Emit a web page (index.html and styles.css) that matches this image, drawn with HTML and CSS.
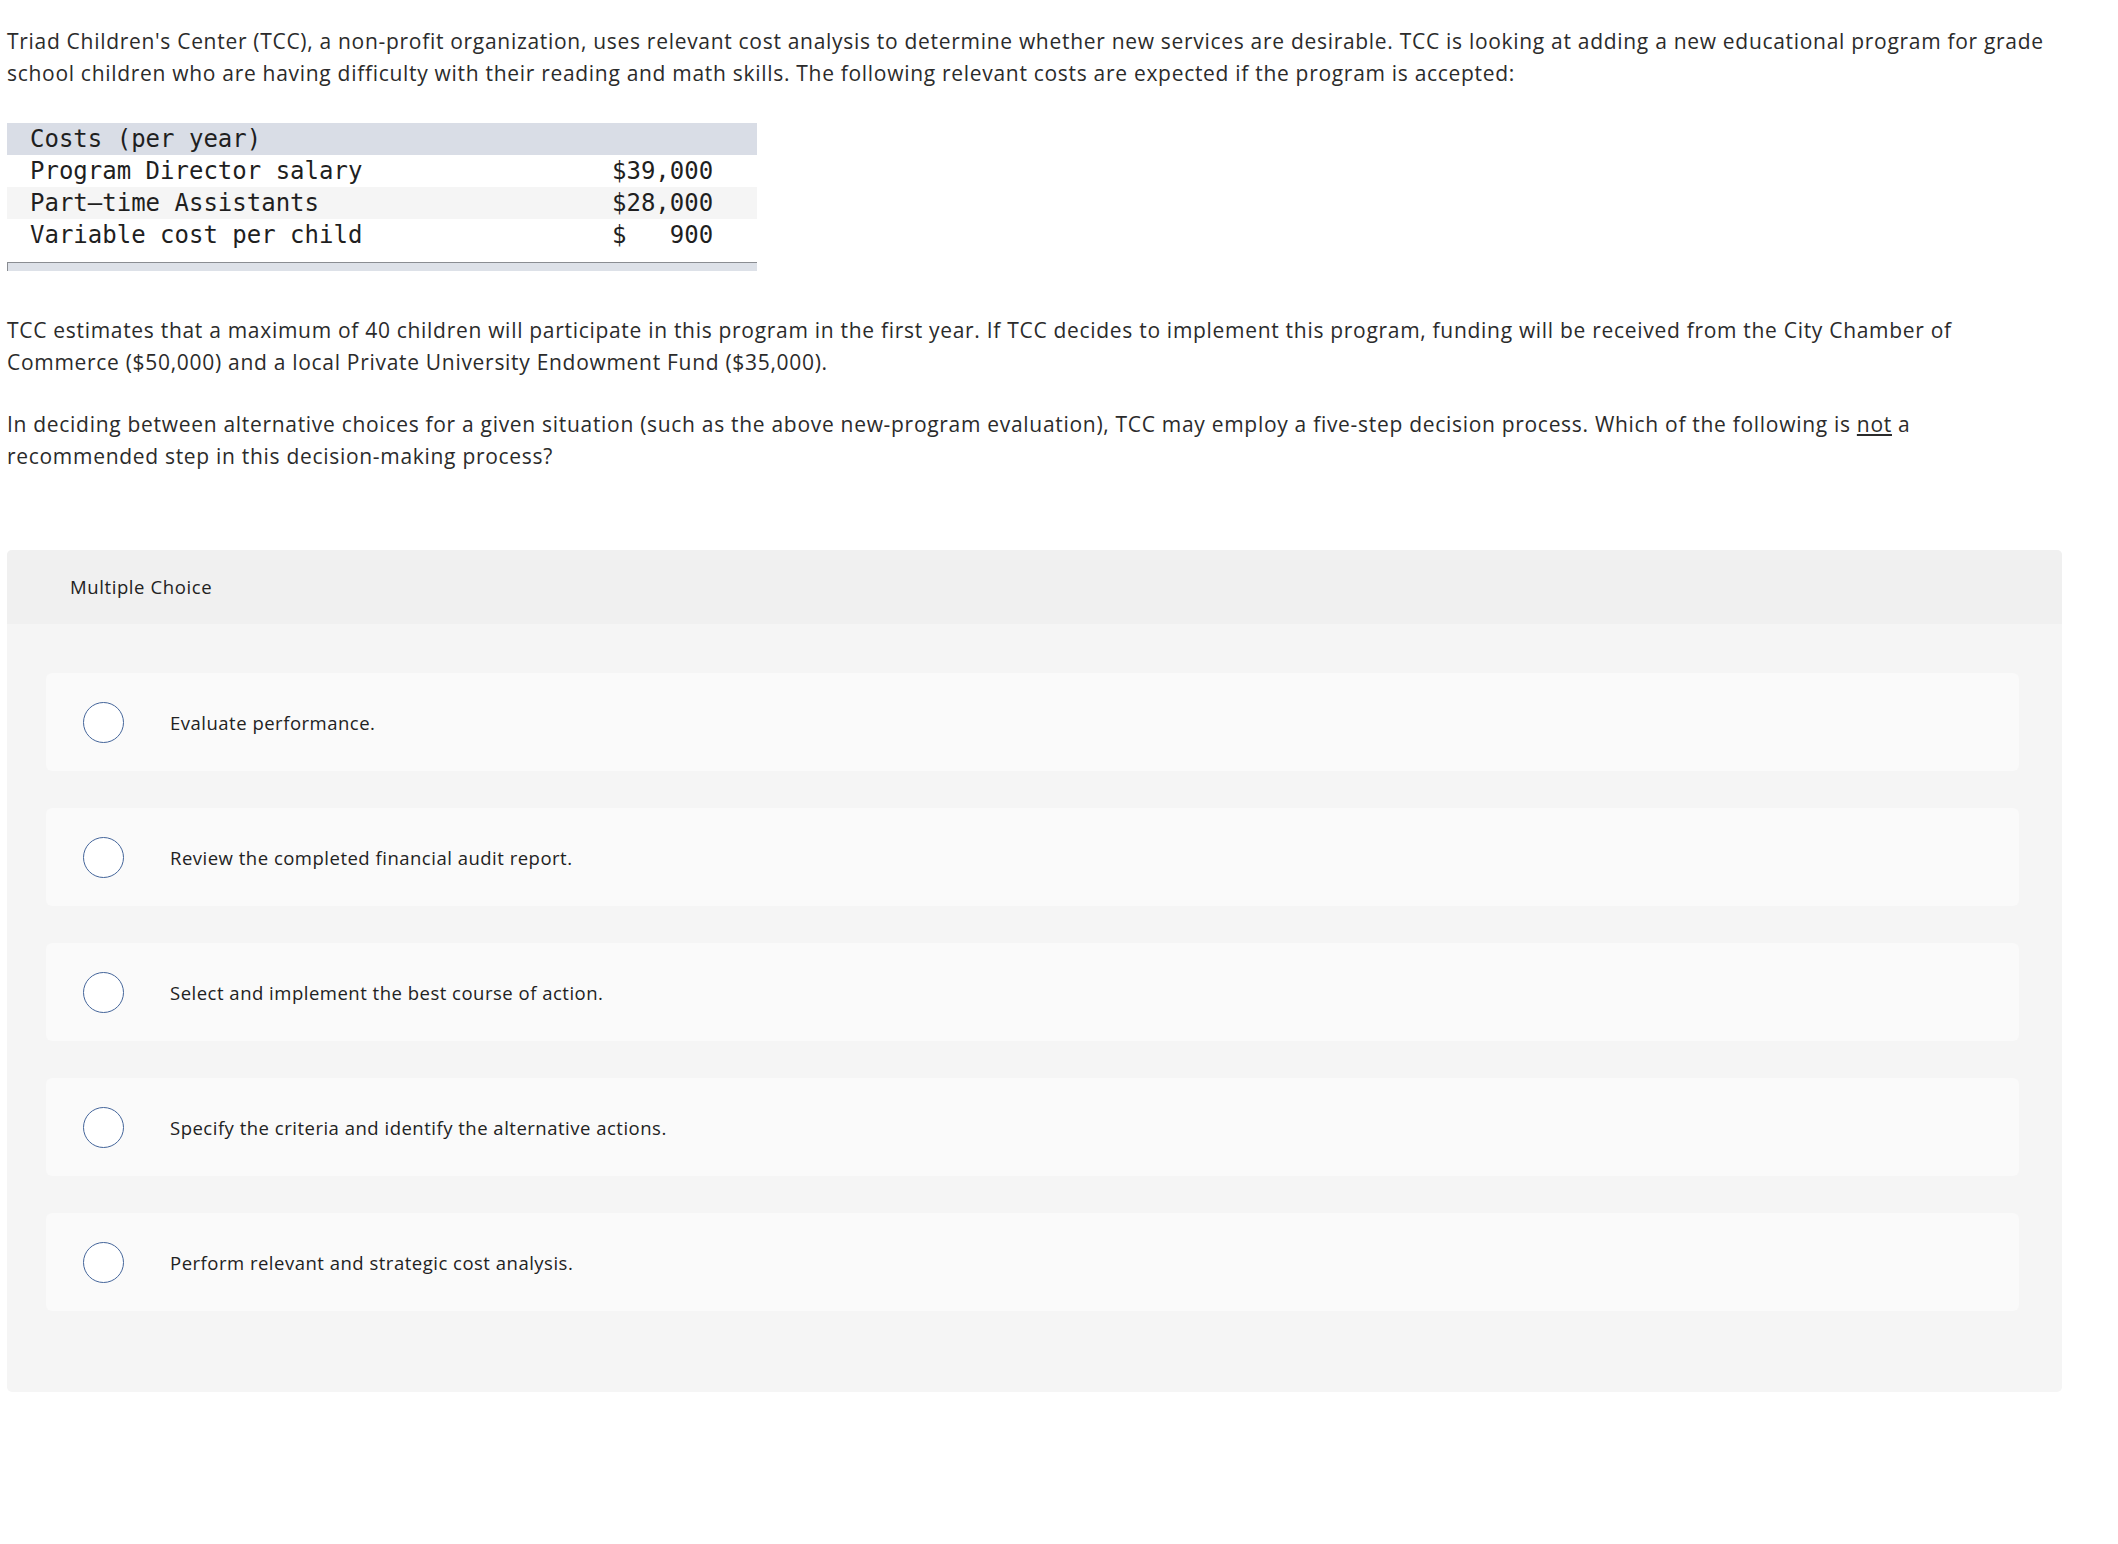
FILE: index.html
```html
<!DOCTYPE html>
<html>
<head>
<meta charset="utf-8">
<link rel="stylesheet" href="styles.css">
</head>
<body>
<div class="page">
  <p class="para p1">Triad Children's Center (TCC), a non-profit organization, uses relevant cost analysis to determine whether new services are desirable. TCC is looking at adding a new educational program for grade school children who are having difficulty with their reading and math skills. The following relevant costs are expected if the program is accepted:</p>

  <div class="table-wrap">
    <div class="trow head"><span class="lbl">Costs (per year)</span><span class="val"></span></div>
    <div class="trow"><span class="lbl">Program Director salary</span><span class="val">$39,000</span></div>
    <div class="trow alt"><span class="lbl">Part&#8211;time Assistants</span><span class="val">$28,000</span></div>
    <div class="trow"><span class="lbl">Variable cost per child</span><span class="val">$   900</span></div>
    <div class="scroll"></div>
  </div>

  <p class="para p2">TCC estimates that a maximum of 40 children will participate in this program in the first year. If TCC decides to implement this program, funding will be received from the City Chamber of Commerce ($50,000) and a local Private University Endowment Fund ($35,000).</p>

  <p class="para p3">In deciding between alternative choices for a given situation (such as the above new-program evaluation), TCC may employ a five-step decision process. Which of the following is <u>not</u> a recommended step in this decision-making process?</p>

  <div class="mc">
    <div class="mc-head">Multiple Choice</div>
    <div class="mc-body">
      <div class="opt"><span class="radio"></span><span class="opt-text">Evaluate performance.</span></div>
      <div class="opt"><span class="radio"></span><span class="opt-text">Review the completed financial audit report.</span></div>
      <div class="opt"><span class="radio"></span><span class="opt-text">Select and implement the best course of action.</span></div>
      <div class="opt"><span class="radio"></span><span class="opt-text">Specify the criteria and identify the alternative actions.</span></div>
      <div class="opt"><span class="radio"></span><span class="opt-text">Perform relevant and strategic cost analysis.</span></div>
    </div>
  </div>
</div>
</body>
</html>
```

FILE: styles.css
```css
html, body {
  margin: 0;
  padding: 0;
  background: #ffffff;
}

.page {
  padding: 0 56px 0 7px;
  font-family: "Open Sans", "Liberation Sans", sans-serif;
  color: #2b2b2b;
}

.para {
  margin: 0;
  font-size: 21px;
  line-height: 32px;
  letter-spacing: 0.7px;
}

.p1 {
  padding-top: 25px;
}

.table-wrap {
  margin-top: 34px;
  width: 750px;
  font-family: "DejaVu Sans Mono", monospace;
  font-size: 24px;
  color: #1f1f1f;
}

.trow {
  display: flex;
  height: 32px;
  line-height: 32px;
  padding-left: 23px;
  white-space: pre;
}

.trow.head {
  background: #d9dde6;
}

.trow.alt {
  background: #f5f5f5;
}

.lbl {
  width: 582px;
}

.val {
  width: 100px;
  text-align: right;
}

.scroll {
  margin-top: 11px;
  height: 8px;
  background: #dde1e8;
  border-top: 1px solid #8a8d92;
  border-left: 1px solid #8a8d92;
}

.p2 {
  margin-top: 43px;
}

.p3 {
  margin-top: 30px;
}

.mc {
  margin-top: 78px;
  border-radius: 5px;
  overflow: hidden;
  background: #f5f5f5;
}

.mc-head {
  height: 74px;
  line-height: 74px;
  padding-left: 63px;
  background: #f0f0f0;
  font-size: 18.5px;
  letter-spacing: 0.6px;
  color: #222222;
}

.mc-body {
  display: flex;
  flex-direction: column;
  gap: 37px;
  padding: 49px 43px 81px 39px;
}

.opt {
  display: flex;
  align-items: center;
  height: 98px;
  padding-left: 37px;
  background: #fafafa;
  border-radius: 6px;
}

.radio {
  box-sizing: border-box;
  width: 41px;
  height: 41px;
  border: 1.5px solid #44659a;
  border-radius: 50%;
  background: #ffffff;
  flex: none;
}

.opt-text {
  margin-left: 46px;
  font-size: 18.5px;
  letter-spacing: 0.5px;
  color: #222222;
}
```
